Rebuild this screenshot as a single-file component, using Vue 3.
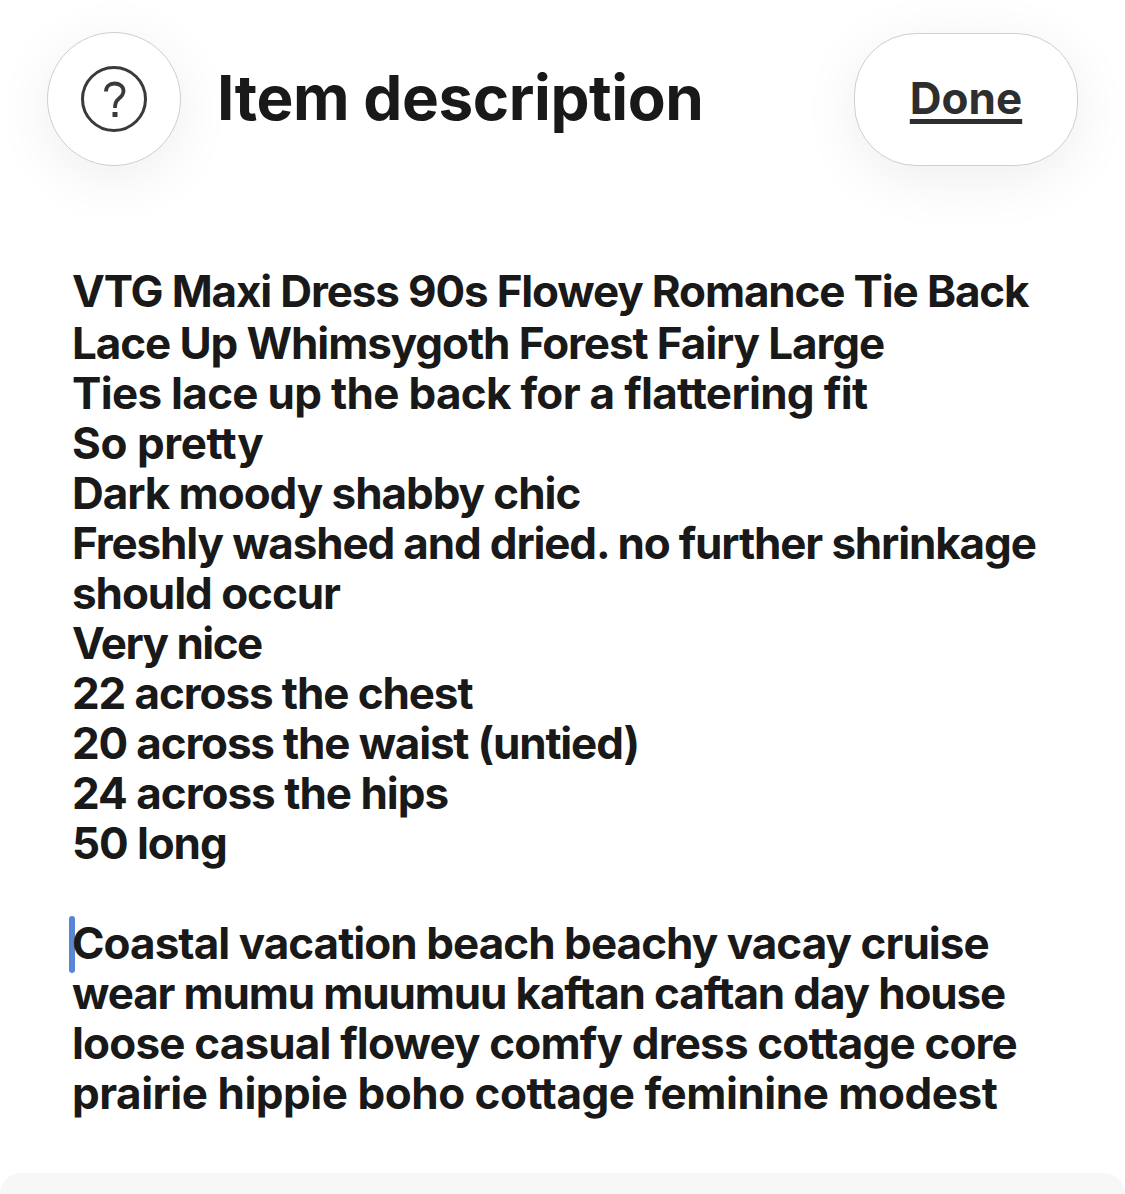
<template>
  <div class="page">
    <header class="topbar">
      <button class="help" aria-label="Help">
        <svg width="66" height="66" viewBox="0 0 66 66" fill="none">
          <circle cx="33" cy="33" r="31.5" stroke="#3a3a3a" stroke-width="3" />
          <path d="M25 25.5C25 20.5 28.5 17.5 33.5 17.5C38.5 17.5 42.5 20.5 42.5 25C42.5 29 40 31 37.5 33C35 35 34 37 34 42" stroke="#3a3a3a" stroke-width="3.8" />
          <rect x="31.5" y="46" width="5" height="5" fill="#3a3a3a" />
        </svg>
      </button>
      <h1 class="title">Item description</h1>
      <button class="done">Done</button>
    </header>
    <main class="body">
      <p
        v-for="(l, i) in lines"
        :key="i"
        class="line"
        :class="{ lead: i === 0 }"
        :style="{ letterSpacing: l.ls + 'px' }"
      ><span v-if="l.caret" class="caret"></span>{{ l.t }}</p>
    </main>
    <div class="bottom"></div>
  </div>
</template>

<script setup>
const lines = [
  { t: 'VTG Maxi Dress 90s Flowey Romance Tie Back', ls: -1.15 },
  { t: 'Lace Up Whimsygoth Forest Fairy Large', ls: -1.1 },
  { t: 'Ties lace up the back for a flattering fit', ls: -0.7 },
  { t: 'So pretty', ls: -0.43 },
  { t: 'Dark moody shabby chic', ls: -1.05 },
  { t: 'Freshly washed and dried. no further shrinkage', ls: -1.15 },
  { t: 'should occur', ls: -1.05 },
  { t: 'Very nice', ls: -1.5 },
  { t: '22 across the chest', ls: -1.1 },
  { t: '20 across the waist (untied)', ls: -1.17 },
  { t: '24 across the hips', ls: -1.0 },
  { t: '50 long', ls: -1.1 },
  { t: '\u00a0', ls: 0 },
  { t: 'Coastal vacation beach beachy vacay cruise', ls: -0.96, caret: true },
  { t: 'wear mumu muumuu kaftan caftan day house', ls: -1.15 },
  { t: 'loose casual flowey comfy dress cottage core', ls: -0.83 },
  { t: 'prairie hippie boho cottage feminine modest', ls: -0.48 },
]
</script>

<style>
html, body { margin: 0; background: #fff; }
</style>

<style scoped>
.page {
  width: 1125px;
  height: 1194px;
  overflow: hidden;
  display: flex;
  flex-direction: column;
  background: #fff;
  font-family: Inter, "Liberation Sans", sans-serif;
  font-variant-ligatures: none;
  font-feature-settings: "calt" 0, "liga" 0;
  color: #191919;
}
.topbar {
  display: flex;
  align-items: center;
  height: 134px;
  margin-top: 32px;
  padding: 0 47px;
}
.help {
  width: 134px;
  height: 134px;
  flex: none;
  border-radius: 50%;
  border: 1.5px solid #cfcfcf;
  background: #fff;
  display: flex;
  align-items: center;
  justify-content: center;
  padding: 0;
  box-shadow: 0 12px 60px rgba(0, 0, 0, 0.07);
}
.title {
  margin: 0 0 4px 36px;
  font-size: 62px;
  font-weight: 700;
  letter-spacing: -0.45px;
  flex: 1;
}
.done {
  width: 224px;
  height: 133px;
  flex: none;
  padding: 0 0 2px;
  border-radius: 62px;
  border: 1.5px solid #cfcfcf;
  background: #fff;
  font-family: Inter, sans-serif;
  font-size: 44px;
  font-weight: 700;
  color: #2e2e2e;
  text-decoration: underline;
  text-decoration-thickness: 5px;
  text-underline-offset: 5px;
  box-shadow: 0 12px 60px rgba(0, 0, 0, 0.07);
}
.body {
  padding: 100px 72px 0;
  flex: 1;
}
.line {
  margin: 0;
  font-size: 44px;
  font-weight: 700;
  line-height: 50.05px;
  white-space: nowrap;
  position: relative;
  z-index: 0;
}
.lead {
  margin-bottom: 1.5px;
}
.caret {
  position: absolute;
  left: -3px;
  top: -2px;
  width: 6px;
  height: 57px;
  background: #5a86d8;
  border-radius: 3px;
  z-index: -1;
}
.bottom {
  height: 21px;
  background: #f7f7f7;
  border-radius: 30px 30px 0 0;
}
</style>
